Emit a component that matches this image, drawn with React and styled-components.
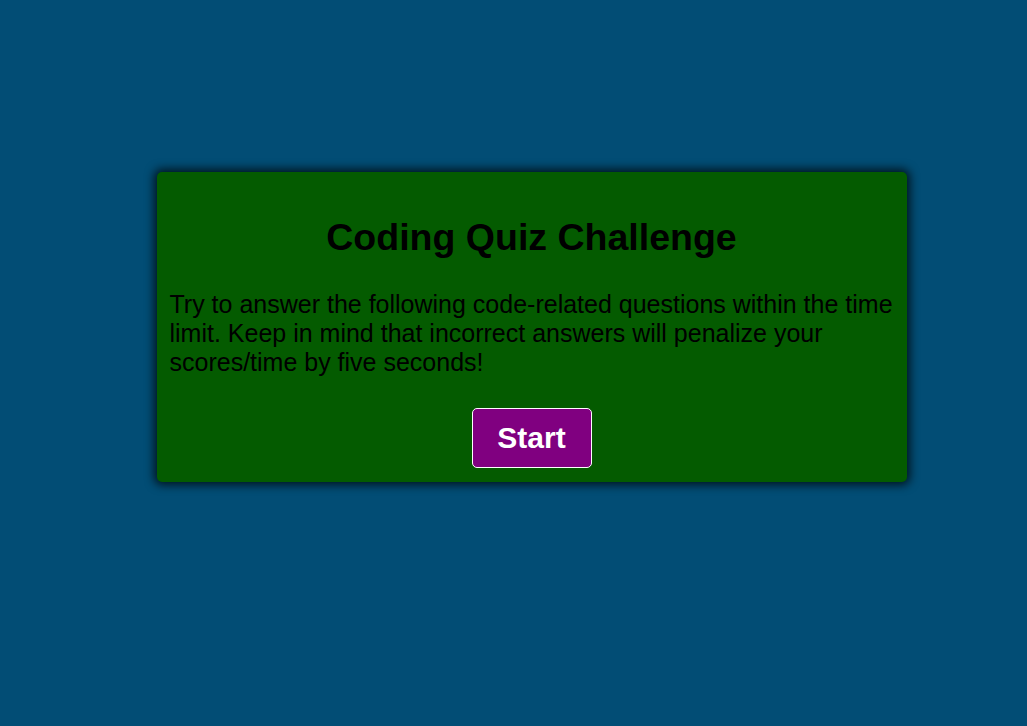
import styled, { createGlobalStyle } from "styled-components";

const GlobalStyle = createGlobalStyle`
  html, body {
    margin: 0;
    padding: 0;
    background-color: #024d75;
    font-family: "Liberation Sans", Arial, sans-serif;
  }
`;

const Page = styled.main`
  min-height: 726px;
  display: flex;
  justify-content: center;
  align-items: flex-start;
  padding: 172px 0 0 36px;
  box-sizing: border-box;
`;

const Card = styled.section`
  width: 750px;
  box-sizing: border-box;
  padding: 21px 13px 14px;
  background-color: #045b00;
  border-radius: 5px;
  box-shadow: 0 0 10px 3px rgba(0, 0, 0, 0.75);
  display: flex;
  flex-direction: column;
  align-items: center;
`;

const Title = styled.h1`
  margin: 23px 0 31px;
  font-size: 37.5px;
  font-weight: bold;
  color: #000;
  text-align: center;
`;

const Intro = styled.p`
  margin: 0 0 31px;
  align-self: stretch;
  font-size: 25px;
  line-height: 29px;
  color: #000;
`;

const StartButton = styled.button`
  width: 120px;
  height: 60px;
  background-color: #800080;
  color: #fff;
  border: 1px solid #fff;
  border-radius: 5px;
  font-family: "Liberation Sans", Arial, sans-serif;
  font-size: 30px;
  font-weight: bold;
  cursor: pointer;
`;

export default function App() {
  return (
    <>
      <GlobalStyle />
      <Page>
        <Card>
          <Title>Coding Quiz Challenge</Title>
          <Intro>
            Try to answer the following code-related questions within the time
            limit. Keep in mind that incorrect answers will penalize your
            scores/time by five seconds!
          </Intro>
          <StartButton>Start</StartButton>
        </Card>
      </Page>
    </>
  );
}
